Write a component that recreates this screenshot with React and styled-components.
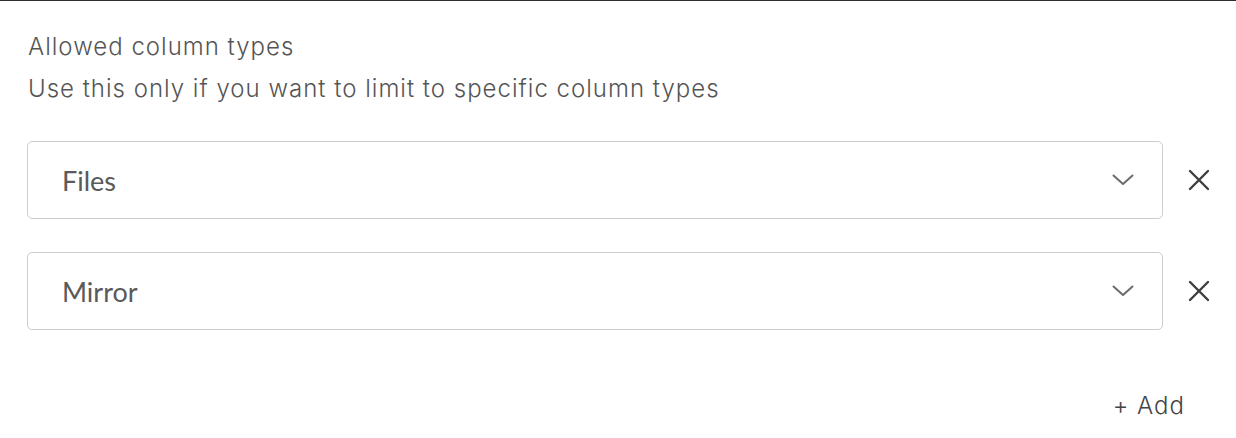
import React from 'react';
import styled, { createGlobalStyle } from 'styled-components';

const GlobalStyle = createGlobalStyle`
  html, body {
    margin: 0;
    padding: 0;
    background: #ffffff;
  }
  body {
    font-family: "Inter", "Liberation Sans", sans-serif;
  }
`;

const columnTypes = ['Files', 'Mirror'];

const Chevron = () => (
  <svg width="22" height="12" viewBox="0 0 22 12" fill="none">
    <polyline points="1.5,1.5 11,10 20.5,1.5" stroke="#6b6b6b" strokeWidth="2" strokeLinecap="round" strokeLinejoin="round" />
  </svg>
);

const Cross = () => (
  <svg width="22" height="22" viewBox="0 0 22 22" fill="none">
    <path d="M2 2 L20 20 M20 2 L2 20" stroke="#3f3f3f" strokeWidth="2.4" strokeLinecap="round" />
  </svg>
);

function App() {
  return (
    <>
      <GlobalStyle />
      <Panel>
        <Title>Allowed column types</Title>
        <Hint>Use this only if you want to limit to specific column types</Hint>
        <Rows>
          {columnTypes.map(type => (
            <Row key={type}>
              <Select>
                <SelectValue>{type}</SelectValue>
                <Chevron />
              </Select>
              <RemoveButton type="button" aria-label={`Remove ${type}`}>
                <Cross />
              </RemoveButton>
            </Row>
          ))}
        </Rows>
        <Footer>
          <AddButton type="button">+ Add</AddButton>
        </Footer>
      </Panel>
    </>
  );
}

const Panel = styled.div`
  border-top: 1px solid #2e2e2e;
  padding: 25px 13px 0 27px;
  height: 437px;
  box-sizing: border-box;
  display: flex;
  flex-direction: column;
`;

const Title = styled.div`
  font-size: 24px;
  line-height: 42px;
  font-weight: 300;
  letter-spacing: 1px;
  color: #555555;
  padding-left: 1px;
`;

const Hint = styled(Title)``;

const Rows = styled.div`
  display: flex;
  flex-direction: column;
  gap: 33px;
  margin-top: 31px;
`;

const Row = styled.div`
  display: flex;
  align-items: center;
  gap: 12px;
`;

const Select = styled.div`
  flex: 1;
  height: 78px;
  box-sizing: border-box;
  border: 1px solid #cdcdcd;
  border-radius: 5px;
  display: flex;
  align-items: center;
  justify-content: space-between;
  padding: 0 28px 0 34px;
  background: #ffffff;
`;

const SelectValue = styled.span`
  font-family: "Lato", "Liberation Sans", sans-serif;
  font-size: 27px;
  color: #5a5a5a;
`;

const RemoveButton = styled.button`
  width: 48px;
  height: 48px;
  border: none;
  background: transparent;
  padding: 0;
  display: flex;
  align-items: center;
  justify-content: center;
  cursor: pointer;
`;

const Footer = styled.div`
  display: flex;
  justify-content: flex-end;
  margin-top: 55px;
  padding-right: 38px;
`;

const AddButton = styled.button`
  border: none;
  background: transparent;
  padding: 0;
  font-family: "Inter", "Liberation Sans", sans-serif;
  font-size: 24px;
  line-height: 42px;
  font-weight: 300;
  letter-spacing: 1px;
  color: #444444;
  cursor: pointer;
`;

export default App;
